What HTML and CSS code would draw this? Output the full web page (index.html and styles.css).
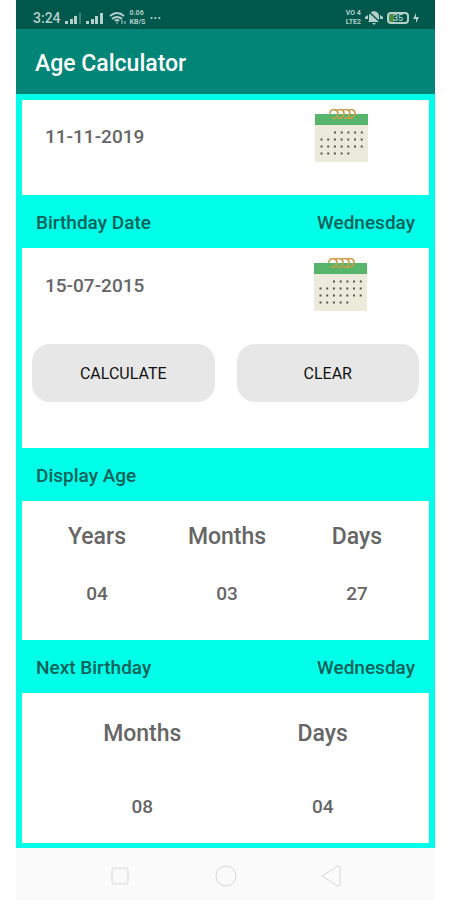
FILE: index.html
```html
<!DOCTYPE html>
<html lang="en">
<head>
<meta charset="utf-8">
<meta name="viewport" content="width=device-width, initial-scale=1">
<title>Age Calculator</title>
<link rel="stylesheet" href="styles.css">
</head>
<body>
<svg class="defs" aria-hidden="true">
  <defs>
    <symbol id="calendar" viewBox="0 0 54 54">
      <path fill="#ebeadb" d="M0 15h53v38H0z"/>
      <path fill="#56b56b" d="M0 5h53v11H0z"/>
      <g fill="none" stroke="#cf9c45" stroke-width="1.6">
        <path d="M15 5c-1-5 7-6 8-1 0 4-3 6-6 5M21 2c3-3 8-1 8 2 0 4-3 6-6 5M27 2c3-3 8-1 8 2 0 4-3 6-6 5M33 2c3-3 7-1 7 2 0 4-3 6-7 5"/>
      </g>
      <g fill="none" stroke="#55574f" stroke-width="2" stroke-dasharray="2 4.7">
        <path d="M19 23.500h30M5.500 30.500h43M5.500 37.500h43M5.500 44.500h30"/>
      </g>
    </symbol>
  </defs>
</svg>
<div class="app">
  <div class="status">
    <div class="status-group">
      <span class="clock">3:24</span>
      <svg width="40" height="14" viewBox="0 0 40 14" fill="#b5d0cb" aria-hidden="true"><path d="M0 10h3v3H0zM5 8h3v5H5zM9 5h3v8H9zM21 10h3v3h-3zM26 8h3v5h-3zM30 5h3v8h-3zM35 2h3v11h-3z"/><path d="M14 2h2v11h-2z" opacity=".35"/></svg>
      <svg width="17" height="14" viewBox="0 0 17 14" fill="none" stroke="#b5d0cb" stroke-width="2" aria-hidden="true"><path d="M1 5q7-6 14 0M3 8q5-4 10 0M6 10q2-2 4 0"/><path d="M7 12h2M13 9v4M16 10v3" stroke-width="1"/></svg>
      <span class="tiny"><span>0.06</span><span>KB/S</span></span>
      <span class="dots">···</span>
    </div>
    <div class="status-group">
      <span class="tiny"><span>VO 4</span><span>LTE2</span></span>
      <svg width="18" height="15" viewBox="0 0 18 15" aria-hidden="true"><path fill="#b5d0cb" d="M4 11V6q0-4 5-5 5 1 5 5v5l1 1H3zM7 13h4l-2 2zM0 7l3-2v4H0zM18 7l-3-2v4h3z"/><path d="M3 1l13 12" stroke="#00574b" stroke-width="1.500"/></svg>
      <span class="battery">35</span>
      <svg width="6" height="12" viewBox="0 0 6 12" fill="#b5d0cb" aria-hidden="true"><path d="M3 1v4h3L3 11V7H0z"/></svg>
    </div>
  </div>
  <header class="bar"><h1>Age Calculator</h1></header>
  <main class="board">
    <section class="card today">
      <span class="date">11-11-2019</span>
      <button class="pick" aria-label="Choose today's date"><svg width="54" height="54"><use href="#calendar"/></svg></button>
    </section>
    <div class="strip"><h2>Birthday Date</h2><span>Wednesday</span></div>
    <section class="card birth">
      <div class="row">
        <span class="date">15-07-2015</span>
        <button class="pick" aria-label="Choose birthday"><svg width="54" height="54"><use href="#calendar"/></svg></button>
      </div>
      <div class="actions"><button class="action">CALCULATE</button><button class="action">CLEAR</button></div>
    </section>
    <div class="strip"><h2>Display Age</h2></div>
    <div class="card age">
      <table>
        <thead><tr><th>Years</th><th>Months</th><th>Days</th></tr></thead>
        <tbody><tr><td>04</td><td>03</td><td>27</td></tr></tbody>
      </table>
    </div>
    <div class="strip"><h2>Next Birthday</h2><span>Wednesday</span></div>
    <div class="card next">
      <table>
        <thead><tr><th>Months</th><th>Days</th></tr></thead>
        <tbody><tr><td>08</td><td>04</td></tr></tbody>
      </table>
    </div>
  </main>
  <nav class="nav">
    <button aria-label="Recent apps"><svg width="22" height="22" viewBox="0 0 22 22"><rect x="3" y="3" width="16" height="16" rx="2"/></svg></button>
    <button aria-label="Home"><svg width="22" height="22" viewBox="0 0 22 22"><circle cx="11" cy="11" r="10"/></svg></button>
    <button aria-label="Back"><svg width="22" height="22" viewBox="0 0 22 22"><path d="M2 11L18 1q2 0 2 2v16q0 2-2 2z"/></svg></button>
  </nav>
</div>
</body>
</html>
```
FILE: styles.css
```css
* { box-sizing: border-box; }
body { margin: 0; background: #fff; color: #666; font-family: Roboto, sans-serif; font-weight: 500; }
h1, h2 { margin: 0; font: inherit; }
button { margin: 0; padding: 0; border: 0; background: none; font: inherit; color: inherit; }
svg { display: block; }
.defs { position: absolute; width: 0; height: 0; }
.app { display: flex; flex-direction: column; min-height: 100vh; margin: 0 15px 0 16px; }
.status { display: flex; justify-content: space-between; align-items: center; height: 29px; padding: 6px 16px 0 17px; background: #00574b; color: #b5d0cb; }
.status-group { display: flex; align-items: center; gap: 4px; }
.clock { font-size: 14px; }
.tiny { display: flex; flex-direction: column; font-size: 7px; line-height: 9px; font-weight: 700; }
.dots { font-size: 14px; }
.battery { width: 22px; height: 12px; border: 2px solid #b5d0cb; border-radius: 4px; background: linear-gradient(90deg, #4f8b3c 5px, #00574b 5px); font-size: 9px; line-height: 8px; text-align: center; }
.bar { display: flex; align-items: center; height: 65px; padding: 3px 19px 0; background: #008577; color: #fff; font-size: 23px; }
.board { padding: 6px 6px 5px; background: #00ffe8; }
.card { background: #fff; }
.today { display: flex; justify-content: space-between; align-items: flex-start; height: 95px; padding: 9px 60px 0 23px; }
.date { padding-top: 16px; font-size: 19px; line-height: 24px; }
.strip { display: flex; justify-content: space-between; align-items: center; height: 53px; padding: 2px 14px 0; color: #0b6159; font-size: 19px; }
.birth { height: 200px; padding: 10px 10px 0; }
.row { display: flex; justify-content: space-between; padding: 0 51px 0 13px; }
.actions { display: flex; gap: 22px; padding-top: 32px; }
.action { flex: 1; height: 58px; border-radius: 18px; background: #e7e7e7; color: #111; font-size: 16px; font-weight: 400; }
table { width: 100%; border-collapse: collapse; table-layout: fixed; }
th, td { padding: 0; text-align: center; vertical-align: middle; font-weight: 500; }
th { font-size: 23px; }
td { font-size: 19px; }
.age { height: 139px; padding: 7px 7px 0 10px; }
.age tr { height: 57px; }
.next { height: 150px; padding: 4px 16px 0 30px; }
.next tr { height: 73px; }
.nav { display: flex; flex: 1; justify-content: space-between; align-items: center; min-height: 52px; padding: 4px 93px 0; background: #fafafa; }
.nav svg { fill: none; stroke: #d8d8d8; stroke-width: 1; }
```
